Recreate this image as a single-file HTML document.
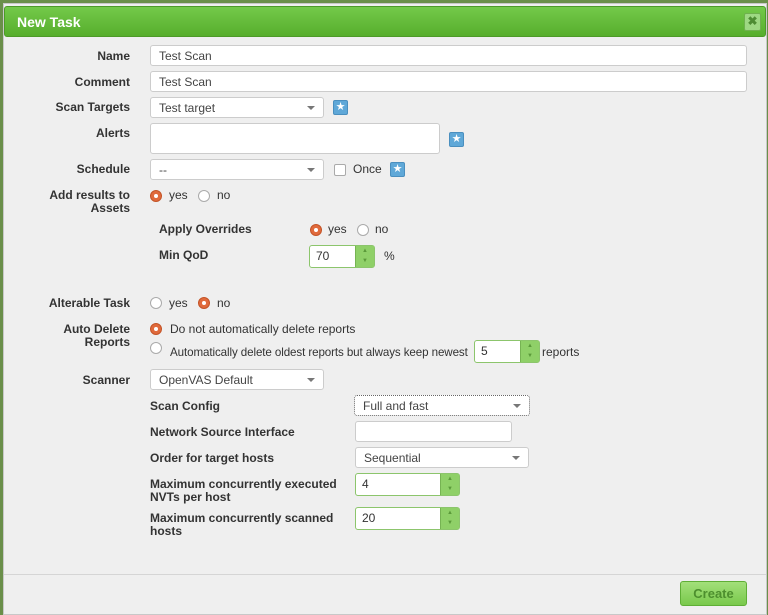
<!DOCTYPE html>
<html><head><style>
*{box-sizing:border-box;margin:0;padding:0}
body{width:768px;height:615px;background:#6a8f4a;font-family:"Liberation Sans",sans-serif;font-size:12px;color:#333;position:relative;overflow:hidden}
.dlg{position:absolute;left:3px;top:3px;width:764px;height:612px;background:#efefef;border:1px solid #c8c8c8}
.title{position:absolute;left:0;top:2px;width:762px;height:31px;background:linear-gradient(#74c94a,#57ae2c);border:1px solid #4d9a28;border-radius:3px;color:#fff;font-weight:bold;font-size:14px;line-height:30px;padding-left:12px}
.x{position:absolute;right:4px;top:6px;width:17px;height:18px;background:#9ed883;border:1px solid #6fb14e;border-radius:2px;color:#4e8c33;font-size:12px;font-weight:bold;text-align:center;line-height:15px}
.a{position:absolute}
.lbl{position:absolute;font-weight:bold;text-align:right;width:130px;left:-4px;line-height:13px}
.lb2{position:absolute;font-weight:bold;line-height:13px}
.in{position:absolute;background:#fff;border:1px solid #ccc;border-radius:3px;height:21px;line-height:20px;padding-left:8px;color:#444}
.sel::after{content:"";position:absolute;right:8px;top:8px;border:4px solid transparent;border-top:4px solid #777}
.star{position:absolute;width:15px;height:15px;background:#5fa8d8;border:1px solid #4a8fbf;border-radius:2px;color:#fff;font-size:11px;text-align:center;line-height:13px}
.r{position:absolute;width:12px;height:12px;border-radius:50%;border:1px solid #aaa;background:#fff}
.r.on{background:#e06a3c;border-color:#c45427}
.r.on::after{content:"";position:absolute;left:3px;top:3px;width:4px;height:4px;border-radius:50%;background:#fff}
.t{position:absolute;line-height:13px;white-space:nowrap}
.sp{position:absolute;background:#fff;border:1px solid #8cc56c;border-radius:3px;height:23px;line-height:21px;padding-left:6px}
.sp::after{content:"▲\A▼";white-space:pre;font-size:6px;line-height:10px;color:#5b9a3a;text-align:center;position:absolute;right:0;top:0;width:18px;height:21px;background:#8fd068;border-left:1px solid #76b353}
.cb{position:absolute;width:12px;height:12px;border:1px solid #aaa;border-radius:2px;background:#fff}
.btn{position:absolute;left:680px;top:581px;width:67px;height:25px;background:linear-gradient(#a3e07a,#79c94c);border:1px solid #5fae36;border-radius:3px;color:#4d8f2e;font-weight:bold;font-size:13px;text-align:center;line-height:23px}
</style></head><body>
<div class="dlg">
<div class="title">New Task<div class="x">✖</div></div>
<div class="lbl" style="top:46px">Name</div><div class="in" style="left:146px;top:41px;width:597px">Test Scan</div>
<div class="lbl" style="top:72px">Comment</div><div class="in" style="left:146px;top:67px;width:597px">Test Scan</div>
<div class="lbl" style="top:97px">Scan Targets</div><div class="in sel" style="left:146px;top:93px;width:174px">Test target</div><div class="star" style="left:329px;top:96px">★</div>
<div class="lbl" style="top:123px">Alerts</div><div class="in" style="left:146px;top:119px;width:290px;height:31px"></div><div class="star" style="left:445px;top:128px">★</div>
<div class="lbl" style="top:159px">Schedule</div><div class="in sel" style="left:146px;top:155px;width:174px">--</div><div class="cb" style="left:330px;top:160px"></div><div class="t" style="left:349px;top:159px">Once</div><div class="star" style="left:386px;top:158px">★</div>
<div class="lbl" style="top:185px">Add results to<br>Assets</div><div class="r on" style="left:146px;top:186px"></div><div class="t" style="left:165px;top:185px">yes</div><div class="r" style="left:194px;top:186px"></div><div class="t" style="left:213px;top:185px">no</div>
<div class="lb2" style="left:155px;top:219px">Apply Overrides</div><div class="r on" style="left:306px;top:220px"></div><div class="t" style="left:324px;top:219px">yes</div><div class="r" style="left:353px;top:220px"></div><div class="t" style="left:371px;top:219px">no</div>
<div class="lb2" style="left:155px;top:245px">Min QoD</div><div class="sp" style="left:305px;top:241px;width:66px">70</div><div class="t" style="left:380px;top:246px">%</div>
<div class="lbl" style="top:293px">Alterable Task</div><div class="r" style="left:146px;top:293px"></div><div class="t" style="left:165px;top:293px">yes</div><div class="r on" style="left:194px;top:293px"></div><div class="t" style="left:213px;top:293px">no</div>
<div class="lbl" style="top:319px">Auto Delete<br>Reports</div><div class="r on" style="left:146px;top:319px"></div><div class="t" style="left:166px;top:319px">Do not automatically delete reports</div>
<div class="r" style="left:146px;top:338px"></div><div class="t" style="left:166px;top:342px;font-size:11.6px;letter-spacing:-0.1px">Automatically delete oldest reports but always keep newest</div><div class="sp" style="left:470px;top:336px;width:66px">5</div><div class="t" style="left:538px;top:342px">reports</div>
<div class="lbl" style="top:370px">Scanner</div><div class="in sel" style="left:146px;top:365px;width:174px">OpenVAS Default</div>
<div class="lb2" style="left:146px;top:396px">Scan Config</div><div class="in sel" style="left:350px;top:391px;width:176px;border:1px dotted #666">Full and fast</div>
<div class="lb2" style="left:146px;top:422px">Network Source Interface</div><div class="in" style="left:351px;top:417px;width:157px"></div>
<div class="lb2" style="left:146px;top:448px">Order for target hosts</div><div class="in sel" style="left:351px;top:443px;width:174px">Sequential</div>
<div class="lb2" style="left:146px;top:474px">Maximum concurrently executed<br>NVTs per host</div><div class="sp" style="left:351px;top:469px;width:105px">4</div>
<div class="lb2" style="left:146px;top:508px">Maximum concurrently scanned<br>hosts</div><div class="sp" style="left:351px;top:503px;width:105px">20</div>
<div class="a" style="left:0;top:570px;width:762px;height:1px;background:#d5d5d5"></div>
</div>
<div class="btn">Create</div>
</body></html>
